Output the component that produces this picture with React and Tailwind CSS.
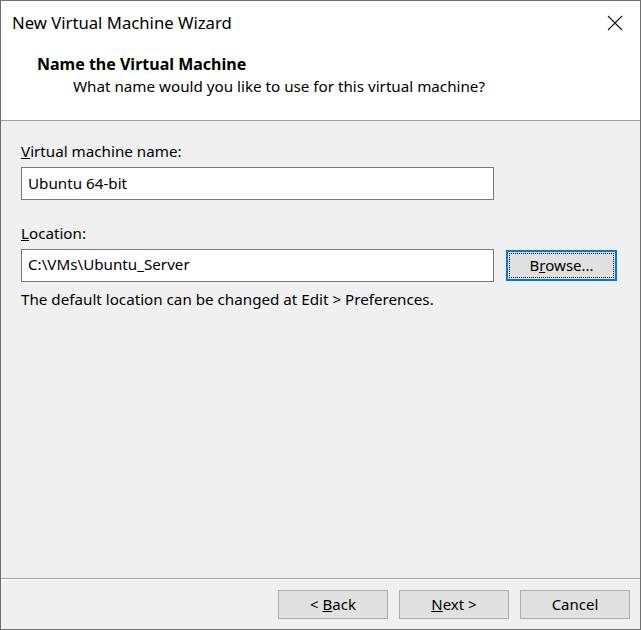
import React from 'react';

const font = { fontFamily: '"Noto Sans", "Open Sans", sans-serif' };

function Btn({ children, className = '' }) {
    return (
        <button className={`h-[29px] w-[110px] bg-[#e1e1e1] border border-[#adadad] text-[15px] text-black leading-none ${className}`}>
            {children}
        </button>
    );
}

export default function App() {
    return (
        <div className="w-[641px] h-[630px] border border-[#6f6f6f] bg-[#f0f0f0] flex flex-col text-black select-none" style={font}>
            {/* Header */}
            <div className="h-[120px] bg-white border-b border-[#a0a0a0] shrink-0 flex flex-col">
                <div className="flex items-center justify-between h-[44px] pl-[11px] pr-[17px]">
                    <span className="text-[16.7px] leading-none">New Virtual Machine Wizard</span>
                    <svg width="16" height="16" viewBox="0 0 16 16" className="-mt-[1px]">
                        <path d="M1 1 L15 15 M15 1 L1 15" stroke="#111" strokeWidth="1.1" fill="none" />
                    </svg>
                </div>
                <div className="pl-[36px] mt-[8px] text-[16px] font-bold leading-[22px]">Name the Virtual Machine</div>
                <div className="pl-[72px] text-[15.2px] leading-[22px]">What name would you like to use for this virtual machine?</div>
            </div>

            {/* Body */}
            <div className="flex-1 px-[20px] pt-[20px] text-[15.2px]">
                <div className="leading-[20px]"><span className="underline">V</span>irtual machine name:</div>
                <div className="mt-[6px] w-[473px] h-[33px] bg-white border border-[#7a7a7a] flex items-center px-[6px]">Ubuntu 64-bit</div>

                <div className="mt-[23px] leading-[20px]"><span className="underline">L</span>ocation:</div>
                <div className="mt-[6px] flex items-center gap-[12px]">
                    <div className="w-[473px] h-[33px] bg-white border border-[#7a7a7a] flex items-center px-[6px] pb-[3px]">C:\VMs\Ubuntu_Server</div>
                    <button className="w-[111px] h-[31px] bg-[#e1e1e1] border-2 border-[#0078d7] p-px">
                        <div className="w-full h-full border border-dotted border-black flex items-center justify-center text-[15px] leading-none">
                            B<span className="underline">r</span>owse...
                        </div>
                    </button>
                </div>
                <div className="mt-[7px] leading-[20px]">The default location can be changed at Edit &gt; Preferences.</div>
            </div>

            {/* Footer */}
            <div className="h-[51px] shrink-0 border-t border-[#a0a0a0] flex flex-col">
                <div className="h-px bg-white" />
                <div className="flex justify-end gap-[11px] pr-[10px] pt-[10px]">
                    <Btn>&lt; <span className="underline">B</span>ack</Btn>
                    <Btn><span className="underline">N</span>ext &gt;</Btn>
                    <Btn>Cancel</Btn>
                </div>
            </div>
        </div>
    );
}
